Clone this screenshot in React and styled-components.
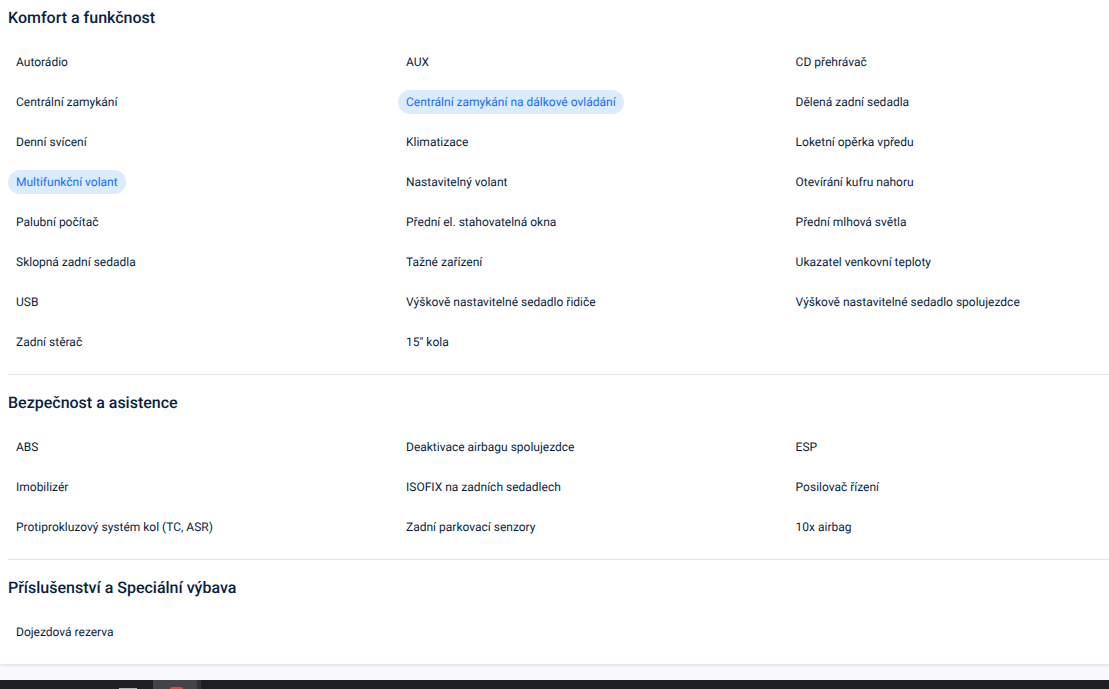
import React from "react";
import styled, { createGlobalStyle } from "styled-components";

const GlobalStyle = createGlobalStyle`
  html, body {
    margin: 0;
    padding: 0;
    height: 100%;
    overflow: hidden;
    background: #f8f9fb;
    font-family: Roboto, "Liberation Sans", sans-serif;
    text-rendering: geometricPrecision;
  }
`;

const sections = [
  {
    title: "Komfort a funkčnost",
    items: [
      "Autorádio", "AUX", "CD přehrávač",
      "Centrální zamykání", "*Centrální zamykání na dálkové ovládání", "Dělená zadní sedadla",
      "Denní svícení", "Klimatizace", "Loketní opěrka vpředu",
      "*Multifunkční volant", "Nastavitelný volant", "Otevírání kufru nahoru",
      "Palubní počítač", "Přední el. stahovatelná okna", "Přední mlhová světla",
      "Sklopná zadní sedadla", "Tažné zařízení", "Ukazatel venkovní teploty",
      "USB", "Výškově nastavitelné sedadlo řidiče", "Výškově nastavitelné sedadlo spolujezdce",
      "Zadní stěrač", "15\" kola",
    ],
  },
  {
    title: "Bezpečnost a asistence",
    items: [
      "ABS", "Deaktivace airbagu spolujezdce", "ESP",
      "Imobilizér", "ISOFIX na zadních sedadlech", "Posilovač řízení",
      "Protiprokluzový systém kol (TC, ASR)", "Zadní parkovací senzory", "10x airbag",
    ],
  },
  {
    title: "Příslušenství a Speciální výbava",
    items: ["Dojezdová rezerva"],
  },
];

export default function App() {
  return (
    <>
      <GlobalStyle />
      <Page>
        <Card>
          {sections.map((section) => (
            <Section key={section.title}>
              <Heading>{section.title}</Heading>
              <Grid>
                {section.items.map((item) => {
                  const active = item.startsWith("*");
                  return (
                    <Cell key={item}>
                      <Feature $active={active}>{active ? item.slice(1) : item}</Feature>
                    </Cell>
                  );
                })}
              </Grid>
            </Section>
          ))}
        </Card>
        <Taskbar>
          <TrayIcon />
          <ActiveApp>
            <RedDot />
          </ActiveApp>
          <AppEdge />
        </Taskbar>
      </Page>
    </>
  );
}

const Page = styled.div`
  height: 689px;
  display: flex;
  flex-direction: column;
  justify-content: space-between;
  overflow: hidden;
`;

const Card = styled.main`
  height: 664px;
  box-sizing: border-box;
  padding: 0 0 0 8px;
  background: #fff;
  box-shadow: 0 1px 3px rgba(20, 30, 60, 0.14);
`;

const Section = styled.section`
  padding-bottom: 12px;
  border-bottom: 1px solid #e2e3ea;
  margin-bottom: 10px;

  &:last-child {
    border-bottom: 0;
    margin-bottom: 0;
  }
`;

const Heading = styled.h2`
  margin: 0;
  height: 36px;
  line-height: 36px;
  font-size: 16px;
  font-weight: 500;
  color: #0b1f44;
`;

const Grid = styled.div`
  display: grid;
  grid-template-columns: 390px 389.6px 1fr;
  grid-auto-rows: 40px;
  padding-top: 6px;
`;

const Cell = styled.div`
  display: flex;
  align-items: center;
`;

const Feature = styled.span`
  height: 24px;
  line-height: 24px;
  padding: 0 8px;
  border-radius: 12px;
  font-size: 12px;
  color: ${(p) => (p.$active ? "#1a6bff" : "#0b1f44")};
  background: ${(p) => (p.$active ? "#dbecff" : "transparent")};
`;

const Taskbar = styled.footer`
  height: 9px;
  display: flex;
  align-items: flex-end;
  padding-left: 119px;
  background: #1f1f21;
`;

const TrayIcon = styled.span`
  width: 18px;
  height: 1px;
  background: #aab0b5;
`;

const ActiveApp = styled.span`
  width: 44px;
  height: 9px;
  margin-left: 16px;
  display: flex;
  justify-content: center;
  align-items: flex-end;
  padding-left: 3px;
  box-sizing: border-box;
  background: #444446;
`;

const AppEdge = styled.span`
  width: 4px;
  height: 9px;
  background: #323234;
`;

const RedDot = styled.span`
  width: 13px;
  height: 2px;
  border-radius: 6px 6px 0 0;
  background: #e8452c;
`;
